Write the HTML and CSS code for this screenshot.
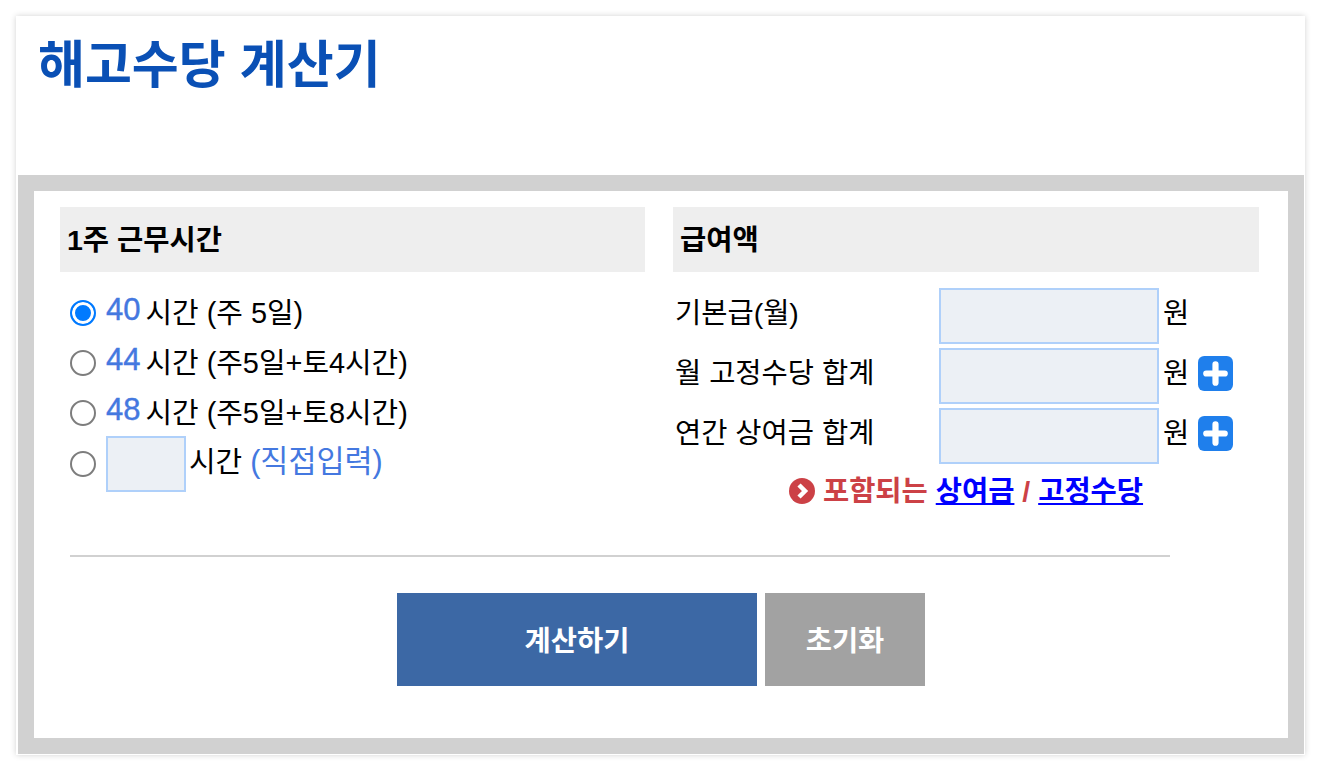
FILE: index.html
```html
<!DOCTYPE html>
<html lang="ko">
<head>
  <meta charset="UTF-8" />
  <title>해고수당 계산기</title>
  <link rel="stylesheet" href="styles.css">
</head>
<body>
  <div class="card">
    <h1 class="title">해고수당 계산기</h1>

    <div class="frame">
      <div class="inner">
        <div class="columns">
          <section>
            <h2 class="head">1주 근무시간</h2>
            <div class="hours">
              <label class="hour-row"><input type="radio" name="hours" checked><span class="num">40</span><span>시간 (주 5일)</span></label>
              <label class="hour-row"><input type="radio" name="hours"><span class="num">44</span><span>시간 (주5일+토4시간)</span></label>
              <label class="hour-row"><input type="radio" name="hours"><span class="num">48</span><span>시간 (주5일+토8시간)</span></label>
              <label class="hour-row custom"><input type="radio" name="hours"><input type="text" class="field field-hours"><span>시간 <span class="hint">(직접입력)</span></span></label>
            </div>
          </section>

          <section>
            <h2 class="head">급여액</h2>
            <div class="pay">
              <div class="pay-row">
                <span class="pay-label">기본급(월)</span>
                <input type="text" class="field field-pay">
                <span class="unit">원</span>
              </div>
              <div class="pay-row">
                <span class="pay-label">월 고정수당 합계</span>
                <input type="text" class="field field-pay">
                <span class="unit">원</span>
                <button class="plus" type="button" aria-label="추가">
                  <svg viewBox="0 0 34 34" width="35" height="35"><rect width="34" height="34" rx="6" fill="#1f7fec"/><path d="M17 8v18M8 17h18" stroke="#fff" stroke-width="6" stroke-linecap="round"/></svg>
                </button>
              </div>
              <div class="pay-row">
                <span class="pay-label">연간 상여금 합계</span>
                <input type="text" class="field field-pay">
                <span class="unit">원</span>
                <button class="plus" type="button" aria-label="추가">
                  <svg viewBox="0 0 34 34" width="35" height="35"><rect width="34" height="34" rx="6" fill="#1f7fec"/><path d="M17 8v18M8 17h18" stroke="#fff" stroke-width="6" stroke-linecap="round"/></svg>
                </button>
              </div>
              <p class="note">
                <svg viewBox="0 0 26 26" width="26" height="26"><circle cx="13" cy="13" r="13" fill="#cc4146"/><path d="M10 7l6 6-6 6" fill="none" stroke="#fff" stroke-width="4.5"/></svg>
                <span class="note-text">포함되는 <a href="#">상여금</a> / <a href="#">고정수당</a></span>
              </p>
            </div>
          </section>
        </div>

        <hr class="divider">

        <div class="actions">
          <button class="btn btn-calc" type="button">계산하기</button>
          <button class="btn btn-reset" type="button">초기화</button>
        </div>
      </div>
    </div>
  </div>
</body>
</html>
```

FILE: styles.css
```css
* { margin: 0; padding: 0; box-sizing: border-box; }
body {
  font-family: "Liberation Sans", "Noto Sans CJK KR", sans-serif;
  background-color: #fff;
  color: #000;
  padding: 16px 15px 15px 16px;
  font-size: 28.5px;
}

.card {
  background-color: #fff;
  box-shadow: 0 0 6px rgba(0, 0, 0, 0.18);
  padding: 0 1px 1px 2px;
}
.title {
  height: 159px;
  padding: 16px 0 0 20px;
  color: #0a50b5;
  font-size: 51px;
  line-height: 68px;
  font-weight: bold;
}

.frame {
  border: 16px solid #d1d1d1;
  background-color: #fff;
}
.inner { padding: 16px 29px 52px 26px; }

.columns {
  display: grid;
  grid-template-columns: 585px 586px;
  gap: 28px;
}
.head {
  height: 65px;
  padding-left: 7px;
  background-color: #eee;
  font-size: 28.5px;
  line-height: 66px;
  font-weight: bold;
}

.hours { padding-top: 15px; padding-left: 10px; }
.hour-row {
  display: flex;
  align-items: center;
  height: 50px;
  font-size: 28.9px;
}
.hour-row > span { padding-bottom: 5px; }
.hour-row input[type="radio"] {
  appearance: none;
  width: 26px;
  height: 26px;
  margin: 2px 10px 0 0;
  border: 2px solid #7d7d7d;
  border-radius: 50%;
  background-color: #fff;
  flex: none;
}
.hour-row input[type="radio"]:checked {
  border-color: #007aff;
  background-color: #007aff;
  box-shadow: inset 0 0 0 3px #fff;
}
.hour-row.custom { height: 56px; margin-top: -1px; }
.hour-row.custom > span { padding-bottom: 10px; }
.hour-row.custom input[type="radio"] { margin-top: -1px; }
.num { color: #4478e0; margin-right: 5px; font-size: 31px; -webkit-text-stroke: 0.4px #4478e0; }
.hint { color: #4478e0; font-size: 30.5px; }

.field {
  background-color: #ecf0f5;
  border: 2px solid #afd0fa;
  height: 56px;
  outline: none;
}
.field-hours { width: 80px; margin-right: 3px; }
.field-pay { width: 220px; margin-right: 4px; }

.pay { padding-top: 16px; }
.pay-row {
  display: flex;
  align-items: center;
  margin-bottom: 4px;
}
.pay-label { width: 266px; padding: 0 0 11px 2px; }
.unit { width: 35px; padding-bottom: 11px; }
.plus {
  border: none;
  background: none;
  display: block;
  height: 35px;
  margin-bottom: 5px;
}
.plus svg { display: block; }

.note {
  display: flex;
  align-items: center;
  justify-content: center;
  gap: 8px;
  margin-top: -2px;
  height: 50px;
  color: #cc4146;
  font-weight: bold;
}
.note-text { padding-bottom: 6px; }
.note a { color: #00f; }

.divider {
  width: 1100px;
  margin: 39px 0 36px 10px;
  border: none;
  border-top: 2px solid #d1d1d1;
}

.actions {
  display: flex;
  justify-content: center;
  gap: 8px;
  margin-left: 3px;
}
.btn {
  height: 93px;
  border: none;
  color: #fff;
  font-family: inherit;
  font-size: 28.5px;
  font-weight: bold;
  padding-bottom: 2px;
}
.btn-calc { width: 360px; background-color: #3c68a5; }
.btn-reset { width: 160px; background-color: #a2a2a2; }
```
